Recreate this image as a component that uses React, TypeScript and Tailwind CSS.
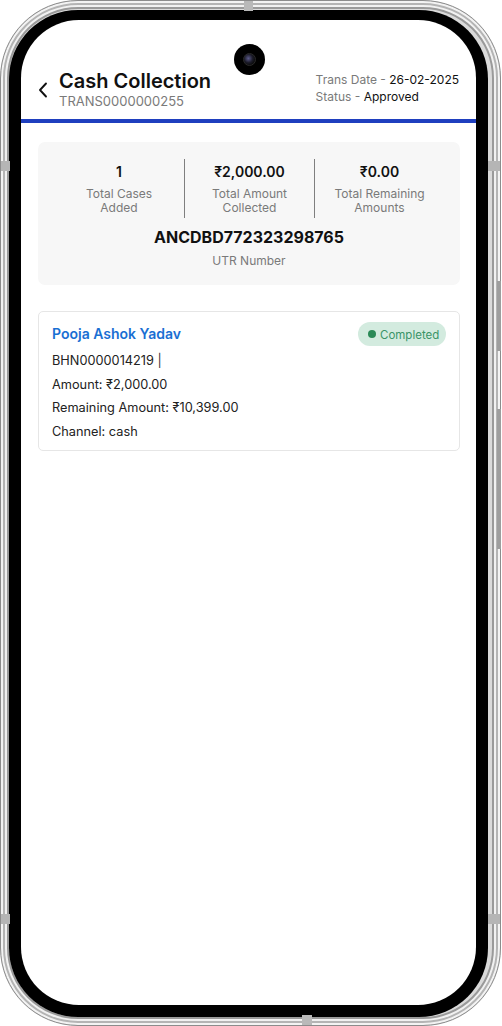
import React from "react";

const font = { fontFamily: 'Inter, "Noto Sans", sans-serif' };

function Stat({ value, label, divider }: { value: string; label: string[]; divider?: boolean }) {
  return (
    <div className={`py-[3px] text-center ${divider ? "border-l border-[#7f7f7f]" : ""}`}>
      <div className="text-[14px] leading-[20px] font-semibold text-[#111]">{value}</div>
      <div className="mt-[5px] text-[12px] leading-[14px] text-[#7a7a7a]">
        {label.map((l) => (
          <div key={l}>{l}</div>
        ))}
      </div>
    </div>
  );
}

export default function App() {
  return (
    <div className="relative w-[502px] h-[1026px] bg-white" style={font}>
      {/* phone frame */}
      <div className="relative w-[501px] h-[1026px] rounded-[78px] border border-[#8c8c8c] bg-[#dadada] pl-[8px] pr-[12px] pt-[9px] pb-[8px] shadow-[inset_0_0_0_2px_#f3f3f3,inset_0_0_0_4px_#b4b4b4,inset_0_0_0_6px_#f1f1f1,inset_0_0_0_8px_#9a9a9a]">
        <div className="h-full rounded-[69px] bg-black pt-[10px] pb-[12px] px-[12px]">
          <div className="h-full rounded-[58px] bg-white overflow-hidden">
            {/* header */}
            <div className="flex justify-between pl-[17px] pr-[17px] pt-[49px] pb-[10px]">
              <div className="flex items-center">
                <svg width="10" height="16" viewBox="0 0 10 16" className="mt-[2px]">
                  <path d="M8 1.5 L2 8 L8 14.5" fill="none" stroke="#111" strokeWidth="1.9" strokeLinecap="round" strokeLinejoin="round" />
                </svg>
                <div className="ml-[11px]">
                  <div className="text-[20px] leading-[24px] font-semibold text-[#111]">Cash Collection</div>
                  <div className="text-[13px] leading-[16px] text-[#7a7a7a]">TRANS0000000255</div>
                </div>
              </div>
              <div className="mt-[2px] text-[12px] leading-[17px]">
                <div>
                  <span className="text-[#7a7a7a]">Trans Date - </span>
                  <span className="text-[#111]">26-02-2025</span>
                </div>
                <div>
                  <span className="text-[#7a7a7a]">Status - </span>
                  <span className="text-[#111]">Approved</span>
                </div>
              </div>
            </div>
            <div className="h-[4px] bg-[#1f3fbf]" />

            <div className="pl-[17px] pr-[16px] pt-[19px]">
              {/* summary */}
              <div className="rounded-[7px] bg-[#f7f7f7] px-[16px] pt-[17px] pb-[16px]">
                <div className="grid grid-cols-3">
                  <Stat value="1" label={["Total Cases", "Added"]} />
                  <Stat value="₹2,000.00" label={["Total Amount", "Collected"]} divider />
                  <Stat value="₹0.00" label={["Total Remaining", "Amounts"]} divider />
                </div>
                <div className="mt-[7px] text-center">
                  <div className="text-[16px] leading-[24px] font-bold text-[#111]">ANCDBD772323298765</div>
                  <div className="mt-[4px] text-[12px] leading-[16px] text-[#7a7a7a]">UTR Number</div>
                </div>
              </div>

              {/* case card */}
              <div className="mt-[26px] rounded-[5px] border border-[#e6e6e6] bg-white px-[13px] pt-[10px] pb-[7px]">
                <div className="flex items-center justify-between">
                  <div className="text-[14px] leading-[20px] font-semibold text-[#1a6fd3]">Pooja Ashok Yadav</div>
                  <div className="flex h-[24px] w-[88px] items-center gap-[4px] rounded-full bg-[#d3ebdf] pl-[10px] pt-[2px]">
                    <span className="mb-[2px] h-[8px] w-[8px] rounded-full bg-[#2b8a57]" />
                    <span className="text-[11.5px] leading-[16px] text-[#3a9467]">Completed</span>
                  </div>
                </div>
                <div className="mt-[3px] text-[12.75px] leading-[23.5px] text-[#222]">
                  <div>
                    BHN0000014219 <span className="text-[#333]">|</span>
                  </div>
                  <div>Amount: ₹2,000.00</div>
                  <div>Remaining Amount: ₹10,399.00</div>
                  <div>Channel: cash</div>
                </div>
              </div>
            </div>
          </div>
        </div>

        {/* camera */}
        <div className="absolute left-[233px] top-[43px] flex h-[31px] w-[31px] items-center justify-center rounded-full bg-black">
          <div className="h-[13px] w-[13px] rounded-full bg-[radial-gradient(circle_at_40%_40%,#5b5a8a_0%,#1c1c2a_45%,#0a0a0a_75%)] border border-[#2a2a2a]" />
        </div>

        {/* antenna bands and buttons */}
        <div className="absolute left-[243px] top-0 h-[10px] w-[9px] bg-[#b9b9b9]" />
        <div className="absolute left-[301px] bottom-0 h-[10px] w-[10px] bg-[#b9b9b9]" />
        <div className="absolute left-0 top-[160px] h-[10px] w-[9px] bg-[#b5b5b5]" />
        <div className="absolute left-0 top-[913px] h-[10px] w-[9px] bg-[#b5b5b5]" />
        <div className="absolute right-0 top-[160px] h-[10px] w-[12px] bg-[#b5b5b5]" />
        <div className="absolute right-0 top-[913px] h-[10px] w-[12px] bg-[#b5b5b5]" />
        <div className="absolute right-[-1px] top-[280px] h-[70px] w-[4px] bg-[#9e9e9e]" />
        <div className="absolute right-[-1px] top-[408px] h-[140px] w-[4px] bg-[#9e9e9e]" />
      </div>
    </div>
  );
}
